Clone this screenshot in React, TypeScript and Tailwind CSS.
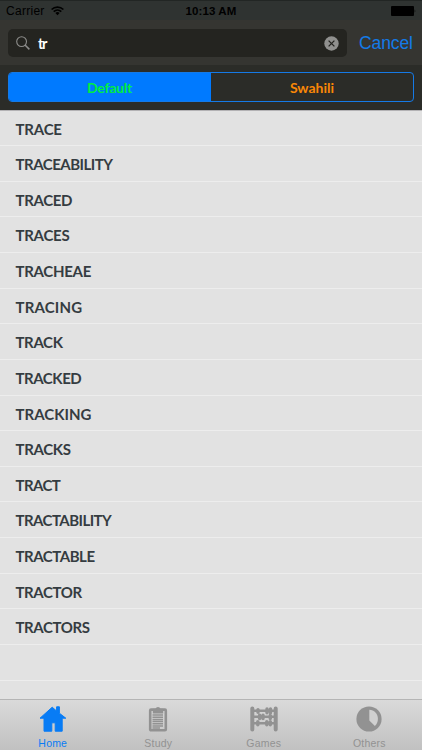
const words = [
  { text: 'TRACE', tracking: 'tracking-[-0.2px]' },
  { text: 'TRACEABILITY', tracking: 'tracking-[-0.5px]' },
  { text: 'TRACED', tracking: 'tracking-[-0.35px]' },
  { text: 'TRACES', tracking: 'tracking-[-0.28px]' },
  { text: 'TRACHEAE', tracking: 'tracking-[-0.3px]' },
  { text: 'TRACING', tracking: 'tracking-[0.16px]' },
  { text: 'TRACK', tracking: 'tracking-[-0.38px]' },
  { text: 'TRACKED', tracking: 'tracking-[-0.46px]' },
  { text: 'TRACKING', tracking: 'tracking-[0px]' },
  { text: 'TRACKS', tracking: 'tracking-[-0.35px]' },
  { text: 'TRACT', tracking: 'tracking-[-0.58px]' },
  { text: 'TRACTABILITY', tracking: 'tracking-[-0.55px]' },
  { text: 'TRACTABLE', tracking: 'tracking-[-0.47px]' },
  { text: 'TRACTOR', tracking: 'tracking-[-0.39px]' },
  { text: 'TRACTORS', tracking: 'tracking-[-0.4px]' },
  { text: '', tracking: '' },
  { text: '', tracking: '' },
];

function StatusBar() {
  return (
    <div className="relative flex h-5 items-center justify-between bg-[#2f3331] pt-[2px] pr-[6px] pl-[6px] text-[12px] text-black shadow-[inset_0_1px_0_#222624]">
      <div className="flex items-center gap-[6px]">
        <span className="tracking-[0.28px]">Carrier</span>
        <svg width="13" height="10" viewBox="0 0 13 10" fill="none" stroke="black" strokeWidth="1.7">
          <path d="M.6 3.5a8.5 8.5 0 0 1 11.8 0M2.7 5.7a5.5 5.5 0 0 1 7.6 0" />
          <path d="M6.5 9.2 4.4 7.1a3 3 0 0 1 4.2 0Z" fill="black" stroke="none" />
        </svg>
      </div>
      <span className="absolute left-0 w-full pt-[2px] text-center text-[11.5px] font-bold tracking-[0.1px]">10:13 AM</span>
      <svg width="25" height="10" viewBox="0 0 25 10">
        <rect width="23" height="10" rx="1" />
        <path d="M23.7 3.3q1.3 1.7 0 3.4Z" />
      </svg>
    </div>
  );
}

function SearchBar() {
  return (
    <div className="flex h-[45px] items-center bg-[#353531] pt-[1px] pl-[8px]">
      <div className="flex h-7 w-[339px] items-center rounded-[5px] bg-[#242420] pr-[8px] pl-[8px]">
        <svg width="14" height="14" viewBox="0 0 14 14" fill="none" stroke="#8d8d8b" strokeWidth="1.1">
          <circle cx="5.6" cy="5.6" r="4.9" />
          <path d="m9 9 4.4 4.4" strokeWidth="1.5" />
        </svg>
        <span className="ml-[8px] flex-1 pt-px font-['Lato',sans-serif] text-[14.5px] font-bold tracking-[-1.4px] text-white">tr</span>
        <svg width="15" height="15" viewBox="0 0 15 15">
          <circle cx="7.5" cy="7.5" r="7.2" fill="#90908e" />
          <path d="m4.6 4.6 5.8 5.8m0-5.8-5.8 5.8" stroke="#242420" strokeWidth="1.3" />
        </svg>
      </div>
      <span className="ml-[12px] text-[17.5px] tracking-[-0.1px] text-[#137be8]">Cancel</span>
    </div>
  );
}

function Segments() {
  return (
    <div className="h-[45px] bg-[#2b2c28] px-[8px] pt-[7px]">
      <div className="grid h-[30px] grid-cols-2 overflow-hidden rounded-[4px] border border-[#157ae6] text-center font-['Lato',sans-serif] text-[14px] leading-[29px] font-bold">
        <div className="bg-[#007aff] pr-px tracking-[-0.2px] text-[#00ee42]">Default</div>
        <div className="text-[#f98706]">Swahili</div>
      </div>
    </div>
  );
}

function HomeIcon() {
  return (
    <svg width="28" height="26" viewBox="0 0 28 26" fill="currentColor" stroke="currentColor" strokeLinejoin="round">
      <path d="M13.2 1.2 17.6 5V.8h2.8v6.4l6.4 5h-3.6v13h-7v-8.4h-3.4v8.4H5v-13H1Z" />
    </svg>
  );
}

function StudyIcon() {
  return (
    <svg width="20" height="26" viewBox="0 0 20 26" fill="none" stroke="currentColor">
      <rect x="2.2" y="3.6" width="15.6" height="20.6" rx=".8" strokeWidth="2.6" />
      <path d="M4.800 7.500V2.800h2.700a2.600 2.600 0 0 1 5 0h2.700v4.700Z" fill="currentColor" stroke="none" />
      <path d="M4.5 9h10.5M4.5 11.2H15M4.5 13.4H15M4.5 15.6H15M4.5 17.8H15M4.5 20H15M4.5 22H12" strokeWidth="1.5" />
    </svg>
  );
}

function GamesIcon() {
  return (
    <svg width="28" height="26" viewBox="0 0 28 26" fill="none" stroke="currentColor">
      <path d="M2.3 2.6v20.8M25.7 2.6v20.8" strokeWidth="4" strokeLinecap="round" />
      <path d="M3 4.8h22M3 10.8h22M3 17.2h22" strokeWidth="2.4" />
      <path d="M8 3.6v2.6M17 3v3.8M20.5 3v3.8M9.6 9.2v3.4M13 9.2v3.4M20.3 9.2v3.4M7.8 15.6v3.2M16.8 15.6v3.2M20.3 15.6v3.2" strokeWidth="3.4" strokeLinecap="round" />
    </svg>
  );
}

function OthersIcon() {
  return (
    <svg width="26" height="26" viewBox="0 0 26 26">
      <circle cx="13" cy="13" r="12.6" fill="currentColor" />
      <path d="M13.3 3.8c4.900.2 8.600 4 8.600 9 0 3-1 5.400-3 7.200L13.300 14.500Z" fill="#d0d0d0" />
    </svg>
  );
}

const tabs = [
  { label: 'Home', Icon: HomeIcon, color: 'text-[#087cf5]' },
  { label: 'Study', Icon: StudyIcon, color: 'text-[#929292]' },
  { label: 'Games', Icon: GamesIcon, color: 'text-[#929292]' },
  { label: 'Others', Icon: OthersIcon, color: 'text-[#929292]' },
];

export default function App() {
  return (
    <div className="flex h-[750px] w-[422px] flex-col overflow-hidden bg-[#e2e2e2] font-['Liberation_Sans',Arial,sans-serif]">
      <StatusBar />
      <SearchBar />
      <Segments />
      <ul className="min-h-0 flex-1 overflow-hidden border-t border-[#b3b2b4]">
        {words.map(({ text, tracking }, i) => (
          <li key={i} className={`h-[35.64px] border-b border-[#ededed] pt-px pl-[15.5px] font-['Lato',sans-serif] text-[15px] leading-[34px] font-bold text-[#353c41] first:-mt-[0.4px] ${tracking}`}>
            {text}
          </li>
        ))}
      </ul>
      <nav className="grid h-[51px] grid-cols-4 border-t border-[#b5b5b5] bg-linear-to-b from-[#dadada] to-[#c1c1c1]">
        {tabs.map(({ label, Icon, color }) => (
          <div key={label} className={`flex flex-col items-center pt-[6px] ${color}`}>
            <Icon />
            <span className="mt-[4px] text-[10.5px] leading-[14px] tracking-[0.2px]">{label}</span>
          </div>
        ))}
      </nav>
    </div>
  );
}
